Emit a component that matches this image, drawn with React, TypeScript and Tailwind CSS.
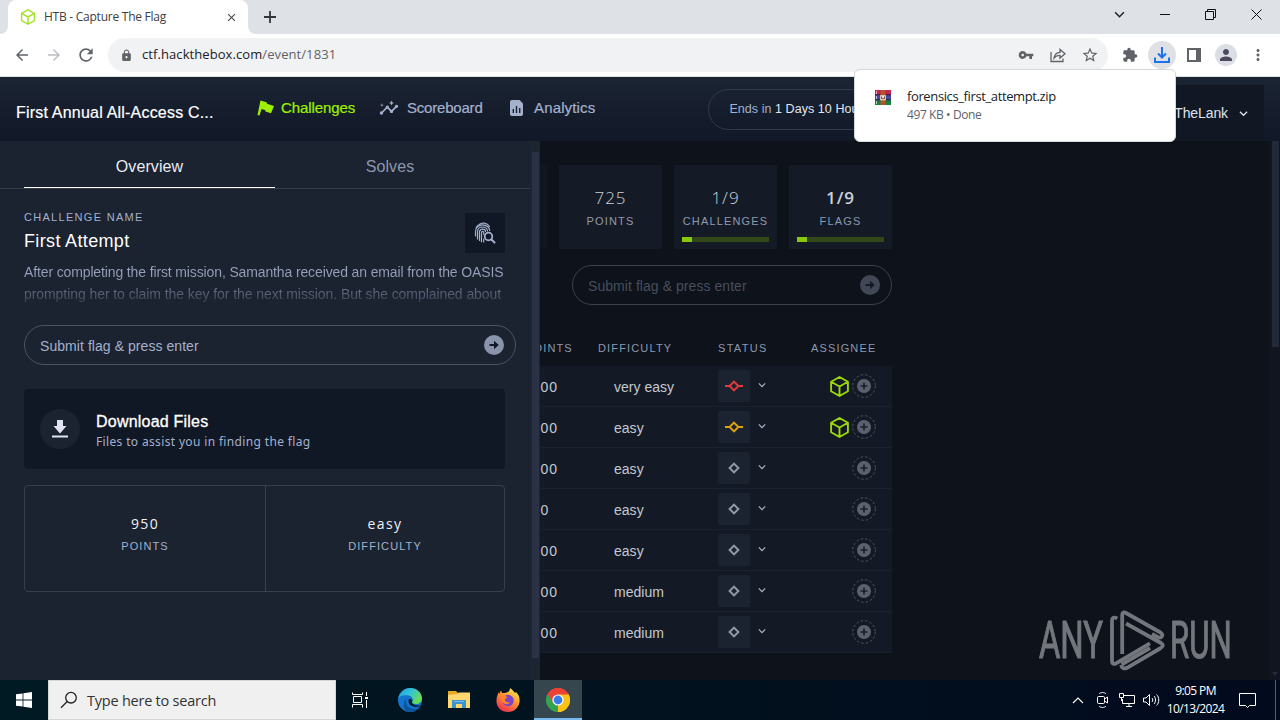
import { ReactNode } from "react";
import {
  MdArrowBack,
  MdArrowForward,
  MdClose,
  MdExtension,
  MdInsights,
  MdLock,
  MdMoreVert,
  MdPerson,
  MdRefresh,
  MdStarOutline,
  MdVpnKey,
} from "react-icons/md";

type Status = "blocked" | "progress" | "open";

type Challenge = {
  points: string;
  difficulty: string;
  status: Status;
  assigned: boolean;
};

const challenges: Challenge[] = [
  { points: "1000", difficulty: "very easy", status: "blocked", assigned: true },
  { points: "1000", difficulty: "easy", status: "progress", assigned: true },
  { points: "1000", difficulty: "easy", status: "open", assigned: false },
  { points: "950", difficulty: "easy", status: "open", assigned: false },
  { points: "1000", difficulty: "easy", status: "open", assigned: false },
  { points: "1000", difficulty: "medium", status: "open", assigned: false },
  { points: "1000", difficulty: "medium", status: "open", assigned: false },
];

const statusColors = {
  blocked: "text-[#e23b3b]",
  progress: "text-[#e0a010]",
  open: "text-[#9299a8]",
};

const Cube = ({ className }: { className: string }) => (
  <svg
    viewBox="0 0 20 20"
    className={className}
    fill="none"
    stroke="currentColor"
    strokeWidth="1.8"
    strokeLinejoin="round"
  >
    <path d="M10 1L18 5.5V14.5L10 19L2 14.5V5.5ZM2 5.5L10 10L18 5.5M10 10V19" />
  </svg>
);

const Chevron = ({ className }: { className: string }) => (
  <svg
    viewBox="0 0 10 6"
    className={className}
    fill="none"
    stroke="currentColor"
    strokeWidth="1.4"
  >
    <path d="M1 1L5 5L9 1" />
  </svg>
);

const SubmitArrow = ({ className }: { className: string }) => (
  <svg viewBox="0 0 20 20" className={className}>
    <circle cx="10" cy="10" r="10" fill="currentColor" />
    <path d="M5.5 9H10V5.8L14.8 10L10 14.2V11H5.5Z" fill="#141b28" />
  </svg>
);

const StatusIcon = ({ status }: { status: Status }) => (
  <svg
    viewBox="0 0 20 14"
    className={`h-[14px] w-5 ${statusColors[status]}`}
    fill="none"
    stroke="currentColor"
    strokeWidth="2"
  >
    <path d="M10 2.6L14.4 7L10 11.4L5.6 7Z" />
    {status !== "open" && <path d="M1 7H5.6M14.4 7H19" />}
  </svg>
);

const TabStrip = () => (
  <div className="flex h-[34px] shrink-0 items-start justify-between bg-[#dee1e6] text-[#202124]">
    <div className="flex h-full items-center">
      <div className="flex h-full w-2 items-end bg-white">
        <div className="h-full w-2 rounded-br-lg bg-[#dee1e6]" />
      </div>
      <div className="flex h-full w-[240px] items-center rounded-t-lg bg-white pl-3 pr-[10px]">
        <Cube className="h-4 w-4 text-[#a6e32d]" />
        <span className="ml-2 flex-1 font-['Open_Sans',sans-serif] text-[12px] tracking-[-0.25px] text-[#3c4043]">
          HTB - Capture The Flag
        </span>
        <MdClose className="h-[13px] w-[13px] text-[#45494d]" />
      </div>
      <div className="flex h-full w-2 bg-white">
        <div className="h-full w-2 rounded-bl-lg bg-[#dee1e6]" />
      </div>
      <svg viewBox="0 0 12 12" className="ml-2 h-3 w-3" stroke="#33363a" strokeWidth="1.8">
        <path d="M6 0V12M0 6H12" />
      </svg>
    </div>
    <div className="flex h-7 items-center gap-[35px] pr-[18px]">
      <Chevron className="h-[7px] w-[11px]" />
      <svg viewBox="0 0 10 11" className="h-[11px] w-[10px]" stroke="#111" fill="none">
        <path d="M0 5.5H10" />
      </svg>
      <svg viewBox="0 0 11 11" className="h-[11px] w-[11px]" stroke="#111" fill="none">
        <path d="M0.5 2.5H8.5V10.5H0.5ZM2.5 2.5V0.5H10.5V8.5H8.5" />
      </svg>
      <svg viewBox="0 0 11 11" className="h-[11px] w-[11px]" stroke="#111" fill="none">
        <path d="M0.5 0.5L10.5 10.5M10.5 0.5L0.5 10.5" />
      </svg>
    </div>
  </div>
);

const Toolbar = () => (
  <div className="flex h-[43px] shrink-0 items-center border-b border-[#dfe2e5] bg-white pl-[13px] text-[#5f6368]">
    <MdArrowBack className="h-[18px] w-[18px]" />
    <MdArrowForward className="ml-[14px] h-[18px] w-[18px] text-[#bdbfc2]" />
    <MdRefresh className="ml-[13px] h-5 w-5" />
    <div className="ml-3 flex h-[34px] w-[1000px] items-center rounded-full bg-[#f0f2f4] pl-3 pr-[9px]">
      <MdLock className="h-[13px] w-[13px]" />
      <span className="ml-[9px] flex-1 font-['Open_Sans',sans-serif] text-[13px] tracking-[0.08px] text-[#202124]">
        ctf.hackthebox.com<span className="text-[#5f6368]">/event/1831</span>
      </span>
      <MdVpnKey className="h-4 w-4" />
      <svg
        viewBox="0 0 16 16"
        className="ml-4 h-4 w-4"
        fill="none"
        stroke="currentColor"
        strokeWidth="1.3"
      >
        <path d="M1 5V14.5H13V11.5M4 11C4.5 7.5 6.5 5.5 10 5.3V2.5L15 6.8L10 11V8.3C7.2 8.3 5.3 9.3 4 11Z" />
      </svg>
      <MdStarOutline className="ml-[15px] h-[18px] w-[18px]" />
    </div>
    <MdExtension className="ml-[14px] h-4 w-4" />
    <div className="ml-[10px] flex h-7 w-7 items-center justify-center rounded-full bg-[#dfe1e4]">
      <svg
        viewBox="0 0 16 16"
        className="h-4 w-4"
        fill="none"
        stroke="#1a73e8"
        strokeWidth="2"
      >
        <path d="M8 0V10M4 6.5L8 10.5L12 6.5M1 10.5V15H15V10.5" />
      </svg>
    </div>
    <svg viewBox="0 0 14 14" className="ml-[11px] h-[14px] w-[14px]" fill="currentColor">
      <path d="M0 0H14V14H0ZM2 2V12H9V2Z" fillRule="evenodd" />
    </svg>
    <div className="ml-[14px] flex h-[22px] w-[22px] items-center justify-center rounded-full bg-[#dcdee6] text-[#484c5c]">
      <MdPerson className="h-[18px] w-[18px]" />
    </div>
    <MdMoreVert className="ml-3 h-[18px] w-[18px]" />
  </div>
);

const Header = () => (
  <div className="flex h-16 shrink-0 items-start bg-linear-to-b from-[#1b2433] to-[#111827] font-['Liberation_Sans',sans-serif]">
    <h1 className="w-[241px] pl-4 pt-6 text-[16px] leading-6 tracking-[0.2px] text-white [-webkit-text-stroke:0.2px]">
      First Annual All-Access C...
    </h1>
    <nav className="flex h-[62px] items-center pl-4 text-[15px] text-[#a4b1cd] [-webkit-text-stroke:0.2px]">
      <svg viewBox="0 0 18 16" className="h-4 w-[18px]" fill="#9fef00">
        <path d="M3.5 0.5L9.5 2.3L10 3.8L17 6L14 13.3L8.5 11.5L8 10L4.5 9L2.5 15.5L0.5 15Z" />
      </svg>
      <span className="ml-[6px] w-[98px] tracking-[-0.08px] text-[#9fef00]">Challenges</span>
      <MdInsights className="h-5 w-5" />
      <span className="ml-[8px] w-[103px] tracking-[-0.2px]">Scoreboard</span>
      <svg viewBox="0 0 14 16" className="h-4 w-[14px]">
        <path
          d="M2 0H9.5L13 3.5V14C13 15.2 12.2 16 11 16H2C.8 16 0 15.2 0 14V2C0 .8 .8 0 2 0Z"
          fill="#a4b1cd"
        />
        <path d="M3.3 13V9M6.5 13V6M9.7 13V8" stroke="#1a2231" strokeWidth="1.4" />
      </svg>
      <span className="ml-[10px] tracking-[0.15px]">Analytics</span>
    </nav>
    <div className="ml-[113px] mt-3 flex h-[41px] w-[270px] items-center whitespace-pre rounded-full border border-[#303a4d] pl-5 text-[12.5px] tracking-[0.06px] text-[#a4b1cd]">
      Ends in <span className="text-[#e2e6ef]">1 Days 10 Hours</span>
    </div>
    <div className="ml-auto mr-4 mt-2 flex h-14 w-[160px] items-center justify-end bg-[#111824] pr-4 text-[14px] text-[#dfe3ec]">
      <span className="tracking-[-0.1px]">TheLank</span>
      <Chevron className="ml-[11px] h-[7px] w-[9px]" />
    </div>
  </div>
);

const DetailValue = ({ value, label }: { value: string; label: string }) => (
  <>
    <p className="font-['Open_Sans',sans-serif] text-[14px] leading-5 tracking-[1.4px] text-[#eef0f5]">
      {value}
    </p>
    <p className="mt-[2px] text-[11px] leading-5 tracking-[1.1px] text-[#a4b1cd]">{label}</p>
  </>
);

const Drawer = () => (
  <div className="flex w-[540px] shrink-0 bg-[#1b2230] font-['Liberation_Sans',sans-serif]">
    <div className="w-[530px]">
      <div className="flex h-12 border-b border-[#363e4f] pl-6 text-[16px]">
        <div className="flex w-[251px] items-center justify-center border-b border-white pt-[5px] tracking-[0.1px] text-[#e9ecf3]">
          Overview
        </div>
        <div className="flex w-[230px] items-center justify-center pt-1 tracking-[0.1px] text-[#8b97af]">
          Solves
        </div>
      </div>
      <div className="pl-6">
        <div className="flex w-[481px] justify-between pt-6">
          <div>
            <p className="text-[11px] leading-[9px] tracking-[1.3px] text-[#a4b1cd]">
              CHALLENGE NAME
            </p>
            <h2 className="mt-[7px] text-[18px] leading-6 tracking-[0.35px] text-white">
              First Attempt
            </h2>
          </div>
          <div className="flex h-10 w-10 items-center justify-center bg-[#111825]">
            <svg
              viewBox="0 0 22 22"
              className="h-[22px] w-[22px]"
              fill="none"
              stroke="#a4b1cd"
              strokeWidth="1.2"
              strokeLinecap="round"
            >
              <path d="M5 2.5C8 .3 13 .5 15.5 4.5M2 6.5C2.5 5 3 4.3 3.8 3.5M1.5 14V9.5C1.5 5 5 2.8 8.5 2.8C12.5 2.8 15.5 5.5 15.7 8.5M3.5 17V10C3.5 6.7 5.8 5 8.5 5C11.2 5 13.2 6.7 13.5 9M5.5 18.5V10.5C5.5 8.5 6.8 7.2 8.7 7.2C10.2 7.2 11.5 8.3 11.5 9.5M7.5 19.8V11C7.5 8.8 9.8 8.8 9.8 11V12.5M9.7 20V17" />
              <circle cx="14.5" cy="14.5" r="3.8" strokeWidth="1.8" />
              <path d="M17.5 17.5L20.5 20.5" strokeWidth="2" />
            </svg>
          </div>
        </div>
        <p className="mt-2 h-[48px] w-[500px] whitespace-nowrap bg-linear-to-b from-[#a4b1cd] via-[#8f9ab1] via-35% to-[#252d3c] bg-clip-text text-[14px] leading-[22px] text-transparent">
          <span className="tracking-[-0.13px]">
            After completing the first mission, Samantha received an email from the OASIS
          </span>
          <br />
          <span className="tracking-[-0.07px]">
            prompting her to claim the key for the next mission. But she complained about
          </span>
        </p>
        <div className="mt-4 flex h-10 w-[492px] items-center justify-between rounded-full border border-[#4a5366] pl-[15px] pr-[11px] text-[14px] tracking-[0.06px] text-[#a4b1cd]">
          <span className="pt-0.5">Submit flag &amp; press enter</span>
          <SubmitArrow className="h-5 w-5 text-[#8993a9]" />
        </div>
        <div className="mt-6 flex h-20 w-[481px] items-center rounded-sm bg-[#111825] pl-4">
          <div className="flex h-10 w-10 items-center justify-center rounded-full bg-[#1b2230]">
            <svg viewBox="0 0 16 18" className="h-[18px] w-4" fill="#dfe3f0">
              <path d="M5 0H11V6H14.5L8 13.5L1.5 6H5ZM0 15.5H16V17.5H0Z" />
            </svg>
          </div>
          <div className="ml-4 pt-[6px]">
            <h3 className="text-[16px] leading-5 tracking-[0.22px] text-white [-webkit-text-stroke:0.3px]">
              Download Files
            </h3>
            <p className="font-['Noto_Sans',sans-serif] text-[12px] leading-5 tracking-[0.35px] text-[#a4b1cd]">
              Files to assist you in finding the flag
            </p>
          </div>
        </div>
        <div className="mt-4 flex h-[107px] w-[481px] rounded-sm border border-[#363e4f] text-center">
          <div className="w-[241px] border-r border-[#363e4f] pt-7">
            <DetailValue value="950" label="POINTS" />
          </div>
          <div className="flex-1 pt-7">
            <DetailValue value="easy" label="DIFFICULTY" />
          </div>
        </div>
      </div>
    </div>
    <div className="flex w-[10px] flex-col items-center bg-[#1d2533] pt-[11px]">
      <div className="h-[506px] w-[7px] bg-[#2b3245]" />
    </div>
  </div>
);

type StatProps = { value: string; label: string; bold?: boolean; progress?: number };

const StatCard = ({ value, label, bold, progress }: StatProps) => (
  <div className="flex h-[84px] w-[103px] shrink-0 flex-col items-center bg-[#151b26] pt-[23px]">
    <p
      className={`font-['Open_Sans',sans-serif] text-[17px] leading-5 tracking-[1px] text-[#ccd1dc] ${
        bold ? "font-semibold" : "font-light"
      }`}
    >
      {value}
    </p>
    <p className="mt-[5px] text-[11px] leading-4 tracking-[1.15px] text-[#8e99ae]">{label}</p>
    {progress && (
      <div className="mt-2 h-[5px] w-[87px] shrink-0 bg-[#334817]">
        <div className="h-full bg-[#89c90b]" style={{ width: `${progress * 100}%` }} />
      </div>
    )}
  </div>
);

const ChallengeRow = ({ challenge }: { challenge: Challenge }) => (
  <div className="flex h-[41px] w-[352px] items-center border-b border-[#1a2130] bg-[#141a25] text-[14px] text-[#c3c8d2]">
    <span className="-ml-[17px] w-[91px] pt-0.5 tracking-[0.95px]">{challenge.points}</span>
    <span className="w-[104px] pt-0.5 tracking-[0.02px]">{challenge.difficulty}</span>
    <div className="flex h-8 w-8 items-center justify-center rounded-xs bg-[#1b2230]">
      <StatusIcon status={challenge.status} />
    </div>
    <Chevron className="mb-[2px] ml-2 h-[6px] w-2 text-[#b0b6c3]" />
    <div className="ml-auto mr-4 flex items-center gap-[2px]">
      {challenge.assigned && <Cube className="h-[21px] w-[21px] text-[#9bd80b]" />}
      <svg viewBox="0 0 24 24" className="h-6 w-6" fill="none">
        <circle cx="12" cy="12" r="11.3" stroke="#4d5361" strokeDasharray="2.5 2" />
        <circle cx="12" cy="12" r="7" fill="#5b616e" />
        <path d="M8.5 12H15.5M12 8.5V15.5" stroke="#181f2b" strokeWidth="1.6" />
      </svg>
    </div>
  </div>
);

const Board = () => (
  <main className="flex flex-1 justify-between overflow-hidden bg-[#0d121b] font-['Liberation_Sans',sans-serif]">
    <div className="w-[352px] pt-6">
      <div className="flex h-[84px] gap-3">
        <div className="w-[7px] bg-[#111721]" />
        <StatCard value="725" label="POINTS" />
        <StatCard value="1/9" label="CHALLENGES" progress={0.115} />
        <StatCard value="1/9" label="FLAGS" bold progress={0.115} />
      </div>
      <div className="ml-8 mt-4 flex h-10 w-[320px] items-center justify-between rounded-full border border-[#3a404e] pl-[15px] pr-[11px] text-[14px] tracking-[0.06px] text-[#474e5c]">
        <span className="pt-0.5">Submit flag &amp; press enter</span>
        <SubmitArrow className="h-5 w-5 text-[#414754]" />
      </div>
      <div className="mt-[33px] flex h-7 items-start text-[11px] leading-5 tracking-[1.15px] text-[#8e99ae]">
        <span className="-ml-[15px] w-[73px]">POINTS</span>
        <span className="w-[120px]">DIFFICULTY</span>
        <span className="w-[93px] tracking-[1.3px]">STATUS</span>
        <span>ASSIGNEE</span>
      </div>
      {challenges.map((challenge, i) => (
        <ChallengeRow key={i} challenge={challenge} />
      ))}
    </div>
    <div className="flex w-[10px] flex-col items-center justify-between bg-[#10151f] pb-1">
      <div className="h-[206px] w-[7px] bg-[#222938]" />
      <div className="h-0 w-0 border-x-3 border-t-4 border-x-transparent border-t-[#242c3a]" />
    </div>
  </main>
);

const DownloadBubble = () => (
  <div className="absolute left-[854px] top-[69px] flex h-[73px] w-[322px] rounded-md border border-[#d5d8dc] bg-white pl-5 pt-[18px] font-['Open_Sans',sans-serif] shadow">
    <svg viewBox="0 0 16 16" className="mt-[2px] h-4 w-4">
      <path d="M0 0H16V5H0Z" fill="#c32350" />
      <path d="M0 5H16V10H0Z" fill="#4349a7" />
      <path d="M0 10H16V15H0Z" fill="#16803d" />
      <path d="M0 4.8H16M0 9.8H16" stroke="#3a1c35" strokeWidth="1" />
      <path d="M5.5 0H10.5V15H5.5Z" fill="#b5532c" />
      <path d="M5.2 5.2H10.8V10.3H5.2Z" fill="#ece5ce" />
      <path d="M6.5 6.5V8.7H9.5V6.5" stroke="#7b4933" fill="none" />
      <path d="M1.5 1V4M1.5 6V9M1.5 11V14" stroke="#e8d4dc" strokeWidth="0.8" />
    </svg>
    <div className="ml-[16px]">
      <p className="text-[13px] leading-[17px] tracking-[-0.38px] text-[#202124]">
        forensics_first_attempt.zip
      </p>
      <p className="text-[12px] leading-5 tracking-[-0.4px] text-[#5f6368]">497 KB • Done</p>
    </div>
  </div>
);

const Watermark = () => (
  <div className="absolute left-[1039px] top-[609px] flex h-[62px] w-[192px] items-center font-['Roboto',sans-serif] text-[52px] leading-none text-[#73767c]">
    <span className="w-[64px] origin-left scale-x-[0.63] pt-0.5 [-webkit-text-stroke:1.2px]">
      ANY
    </span>
    <svg
      viewBox="0 0 60 62"
      className="ml-1 h-[62px] w-[60px] shrink-0"
      fill="none"
      stroke="currentColor"
      strokeWidth="3.8"
      strokeLinejoin="round"
    >
      <path d="M10.3 9.5C7 7.5 5 9 5 11.5V52C5 55 7 55.5 9 54.3L43 34.3" />
      <path d="M15.2 45V6C15.2 3.3 17 2.8 19 4L53.5 23.5C57 26 54.5 29.8 51 28.2L45 25" />
      <path d="M19 14.5L54 34C57 36 56 37.5 53 39.5L20 58.8C17 60.3 14.5 59 14.2 56" />
      <path d="M14.5 55.5L43 39" />
    </svg>
    <span className="ml-[3px] w-[62px] origin-left scale-x-[0.6] pt-0.5 [-webkit-text-stroke:1.2px]">
      RUN
    </span>
  </div>
);

const TaskItem = ({ children }: { children: ReactNode }) => (
  <div className="flex h-full w-[49px] items-center justify-center">{children}</div>
);

const Taskbar = () => (
  <footer className="flex h-10 shrink-0 items-center bg-linear-to-r from-[#001a24] via-[#02121e] to-[#020a1e] font-['Open_Sans',sans-serif] text-white">
    <div className="flex h-full w-12 items-center justify-center">
      <svg viewBox="0 0 16 16" className="h-4 w-4" fill="white">
        <path d="M0 2.3L6.6 1.4V7.6H0ZM7.4 1.2L16 0V7.6H7.4ZM0 8.4H6.6V14.6L0 13.7ZM7.4 8.4H16V16L7.4 14.8Z" />
      </svg>
    </div>
    <div className="flex h-full w-[288px] items-center border border-[#d5d5d7] bg-[#f0f0f0] pl-[11px] text-[#333]">
      <svg viewBox="0 0 18 18" className="h-[18px] w-[18px]" fill="none" stroke="#222" strokeWidth="1.3">
        <circle cx="11" cy="6.7" r="5.3" />
        <path d="M7.2 10.5L1 16.7" />
      </svg>
      <span className="ml-[9px] pt-[2px] text-[14.5px] tracking-[-0.23px]">
        Type here to search
      </span>
    </div>
    <TaskItem>
      <svg viewBox="0 0 16 16" className="mr-[2px] h-4 w-4" fill="none" stroke="white">
        <path d="M0.5 0.5V2.5H10.5V0.5M1.5 4.5H9.5V10.5H1.5ZM0.5 15.5V12.5H10.5V15.5M14.5 0V4M14.5 8V16" />
        <path d="M13 5H16V7H13Z" fill="white" stroke="none" />
      </svg>
    </TaskItem>
    <TaskItem>
      <svg viewBox="0 0 24 24" className="h-6 w-6">
        <defs>
          <linearGradient id="edgeTop" x1="0" y1="0" x2="1" y2="0.5">
            <stop offset="0" stopColor="#2299d6" />
            <stop offset="0.5" stopColor="#30c2da" />
            <stop offset="1" stopColor="#68dc56" />
          </linearGradient>
        </defs>
        <circle cx="12" cy="12" r="12" fill="#1374cf" />
        <path
          d="M0 11C2 3 8 0 12 0C19 0 24 5 24 10.5C24 14 21 16 18 16C15 16 13.5 15 14 14C15.5 12 15 8.5 11 7.5C6 6.5 1 8 0 11Z"
          fill="url(#edgeTop)"
        />
        <path
          d="M9 10C6 15 10 21 16 21C18.5 21 20.5 20 22 18.5C19 23 14 24.5 10 24C5 22 4 14 9 10Z"
          fill="#0c559d"
        />
        <path d="M11 11C9 15 13 19 18 19C20 19 22 18 22.7 17C20 18 14 17 14 14C15 12.5 14 10.5 11 11Z" fill="#00202f" />
      </svg>
    </TaskItem>
    <TaskItem>
      <svg viewBox="0 0 22 20" className="h-5 w-[22px]">
        <path d="M0 1H8L10 3H22V18H0Z" fill="#e9a928" />
        <path d="M0 5L9 4L11 2.5H22V18H0Z" fill="#ffd970" />
        <path d="M4 18V10H18V18H14V14H8V18Z" fill="#3c91cf" />
        <path d="M6 11.5H16" stroke="#78bce9" />
      </svg>
    </TaskItem>
    <TaskItem>
      <svg viewBox="0 0 24 24" className="h-6 w-6">
        <defs>
          <linearGradient id="foxBody" x1="0.8" y1="0" x2="0.2" y2="1">
            <stop offset="0" stopColor="#fff04a" />
            <stop offset="0.45" stopColor="#ff9230" />
            <stop offset="1" stopColor="#ed2557" />
          </linearGradient>
        </defs>
        <path
          d="M14 0C17 2 18 4 19 5L20 4C23 7 24 10 23.5 14C22.5 20 18 24 12 24C5 24 0 19 0.5 12C0.7 8 2 6 3 4V6L5 2.5L6 5H9C11 4.5 14 4 14 0Z"
          fill="url(#foxBody)"
        />
        <circle cx="12" cy="12.5" r="5.7" fill="#7c45c9" />
        <path d="M5 8C8 7 10 8 11.5 9.5L9 11C8.5 13.5 11 15 14 14C12 18 6 16 5.5 12Z" fill="#ff8425" />
      </svg>
    </TaskItem>
    <div className="ml-[2px] flex h-full w-12 items-center justify-center border-b-2 border-[#76b9ed] bg-[#35464f] pt-[2px]">
      <svg viewBox="0 0 24 24" className="h-6 w-6">
        <path d="M12 12L1.6 6A12 12 0 0 1 22.4 6Z" fill="#ea4335" />
        <path d="M12 12L22.4 6A12 12 0 0 1 12 24Z" fill="#fbc116" />
        <path d="M12 12V24A12 12 0 0 1 1.6 6Z" fill="#34a350" />
        <path d="M12 6.5H22.6L22.4 6A12 12 0 0 0 1.6 6L7.2 14.8Z" fill="#ea4335" />
        <path d="M16.8 14.7L11.5 24H12A12 12 0 0 0 22.6 6.5H12Z" fill="#fbc116" />
        <circle cx="12" cy="12" r="5.6" fill="white" />
        <circle cx="12" cy="12" r="4.4" fill="#337cea" />
      </svg>
    </div>
    <div className="ml-auto flex h-full items-center">
      <svg viewBox="0 0 12 7" className="h-[7px] w-3" fill="none" stroke="white" strokeWidth="1.2">
        <path d="M1 6L6 1L11 6" />
      </svg>
      <svg viewBox="0 0 12 16" className="ml-[13px] h-4 w-3" fill="none" stroke="white">
        <rect x="0.5" y="4.5" width="7" height="7" rx="1" />
        <path d="M7.5 7L10.5 5V11L7.5 9M2 2C3.5 0 7.5 0 9 2M2 14C3.5 16 7.5 16 9 14" />
      </svg>
      <svg viewBox="0 0 16 14" className="ml-[10px] h-[14px] w-4" fill="none" stroke="white">
        <path d="M5 2.5H15.5V10.5H3.5V6M7 13.5H13M10 10.5V13.5M0.5 0.5H4.5V4.5H0.5ZM2.5 4.5V8" />
      </svg>
      <svg viewBox="0 0 17 14" className="ml-2 h-[14px] w-[17px]" fill="none" stroke="white">
        <path d="M0.5 5V9H3L6.5 12.5V1.5L3 5ZM9 5C10 6 10 8 9 9M11 3C13 5 13 9 11 11M13.5 1.5C16.5 4 16.5 10 13.5 12.5" />
      </svg>
      <div className="ml-[5px] w-[61px] text-center text-[12px] leading-[18px] tracking-[-0.6px]">
        <p>9:05 PM</p>
        <p>10/13/2024</p>
      </div>
      <svg viewBox="0 0 17 17" className="ml-[13px] mr-[19px] h-[17px] w-[17px]" fill="none" stroke="white">
        <path d="M0.5 1.5H16.5V13.5H10.5L8.5 15.5L6.5 13.5H0.5Z" />
      </svg>
      <div className="mr-1 h-full w-px bg-[#59616f]" />
    </div>
  </footer>
);

const App = () => {
  return (
    <div className="relative flex h-[720px] w-[1280px] flex-col overflow-hidden">
      <TabStrip />
      <Toolbar />
      <Header />
      <div className="flex min-h-0 flex-1">
        <Drawer />
        <Board />
      </div>
      <Taskbar />
      <DownloadBubble />
      <Watermark />
    </div>
  );
};

export default App;
